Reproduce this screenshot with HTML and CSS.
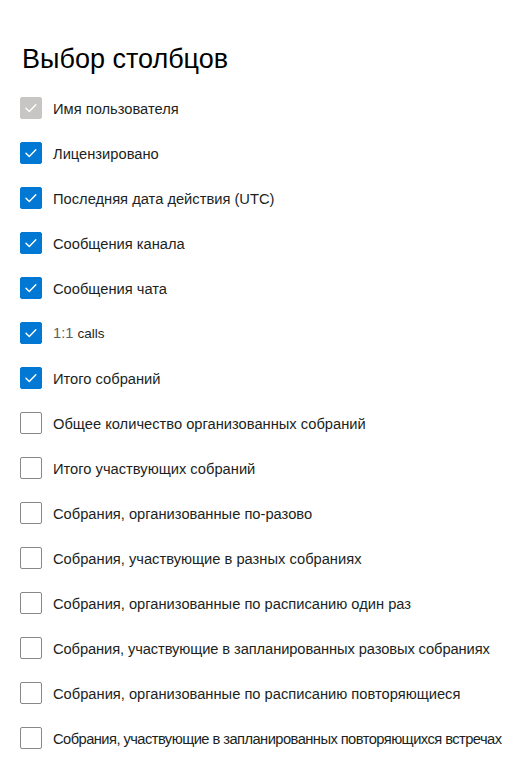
FILE: index.html
```html
<!DOCTYPE html>
<html lang="ru">
<head>
<meta charset="utf-8">
<link rel="stylesheet" href="styles.css">
</head>
<body>
<div class="panel">
  <h1 class="title">Выбор столбцов</h1>
  <ul class="list">
    <li class="row"><span class="box disabled"><svg viewBox="0 0 22 22"><path d="M5.5 11.3l3.6 3.5 7.2-7.4"/></svg></span><span class="label">Имя пользователя</span></li>
    <li class="row"><span class="box checked"><svg viewBox="0 0 22 22"><path d="M5.5 11.3l3.6 3.5 7.2-7.4"/></svg></span><span class="label">Лицензировано</span></li>
    <li class="row"><span class="box checked"><svg viewBox="0 0 22 22"><path d="M5.5 11.3l3.6 3.5 7.2-7.4"/></svg></span><span class="label">Последняя дата действия (UTC)</span></li>
    <li class="row"><span class="box checked"><svg viewBox="0 0 22 22"><path d="M5.5 11.3l3.6 3.5 7.2-7.4"/></svg></span><span class="label">Сообщения канала</span></li>
    <li class="row"><span class="box checked"><svg viewBox="0 0 22 22"><path d="M5.5 11.3l3.6 3.5 7.2-7.4"/></svg></span><span class="label">Сообщения чата</span></li>
    <li class="row"><span class="box checked"><svg viewBox="0 0 22 22"><path d="M5.5 11.3l3.6 3.5 7.2-7.4"/></svg></span><span class="label"><span class="muted">1:1</span> <span class="small">calls</span></span></li>
    <li class="row"><span class="box checked"><svg viewBox="0 0 22 22"><path d="M5.5 11.3l3.6 3.5 7.2-7.4"/></svg></span><span class="label">Итого собраний</span></li>
    <li class="row"><span class="box"></span><span class="label">Общее количество организованных собраний</span></li>
    <li class="row"><span class="box"></span><span class="label">Итого участвующих собраний</span></li>
    <li class="row"><span class="box"></span><span class="label">Собрания, организованные по-разово</span></li>
    <li class="row"><span class="box"></span><span class="label">Собрания, участвующие в разных собраниях</span></li>
    <li class="row"><span class="box"></span><span class="label">Собрания, организованные по расписанию один раз</span></li>
    <li class="row"><span class="box"></span><span class="label tight">Собрания, участвующие в запланированных разовых собраниях</span></li>
    <li class="row"><span class="box"></span><span class="label">Собрания, организованные по расписанию повторяющиеся</span></li>
    <li class="row"><span class="box"></span><span class="label tighter">Собрания, участвующие в запланированных повторяющихся встречах</span></li>
  </ul>
</div>
</body>
</html>
```
FILE: styles.css
```css
html, body {
  margin: 0;
  padding: 0;
  background: #ffffff;
}
body {
  font-family: "Liberation Sans", Arial, sans-serif;
  color: #1b1a19;
}
.panel {
  padding: 43px 0 0 20px;
}
.title {
  margin: 0 0 10px 2px;
  font-size: 27px;
  line-height: 32px;
  font-weight: 400;
  color: #000000;
}
.list {
  list-style: none;
  margin: 0;
  padding: 0;
}
.row {
  display: flex;
  align-items: center;
  gap: 11px;
  height: 45px;
}
.box {
  box-sizing: border-box;
  width: 22px;
  height: 22px;
  border: 1px solid #8a8886;
  border-radius: 2px;
  background: #ffffff;
  flex: none;
  display: flex;
}
.box svg {
  width: 20px;
  height: 20px;
  fill: none;
  stroke: #ffffff;
  stroke-width: 1.6;
  stroke-linecap: round;
  stroke-linejoin: round;
}
.box.checked {
  background: #0078d4;
  border-color: #0078d4;
}
.box.disabled {
  background: #c8c6c4;
  border-color: #c8c6c4;
}
.label {
  font-size: 14.7px;
  line-height: 20px;
  padding-top: 2px;
  color: #201f1e;
  white-space: nowrap;
}
.label.tight {
  letter-spacing: -0.1px;
}
.label.tighter {
  letter-spacing: -0.55px;
}
.muted {
  color: #605e5c;
}
.small {
  font-size: 13.5px;
}
```
